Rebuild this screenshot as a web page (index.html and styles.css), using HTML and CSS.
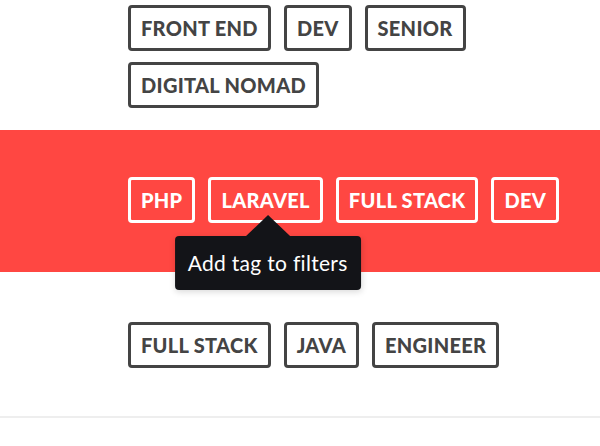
FILE: index.html
```html
<!DOCTYPE html>
<html lang="en">
<head>
<meta charset="utf-8">
<title>Tags</title>
<link rel="stylesheet" href="styles.css">
</head>
<body>
<div class="list">
  <div class="row row-first">
    <div class="tags">
      <span class="tag">Front End</span>
      <span class="tag">Dev</span>
      <span class="tag">Senior</span>
      <span class="tag">Digital Nomad</span>
    </div>
  </div>
  <div class="row row-hot">
    <div class="tags">
      <span class="tag">PHP</span>
      <span class="tag tag-tip">Laravel
        <span class="tooltip">Add tag to filters</span>
      </span>
      <span class="tag">Full Stack</span>
      <span class="tag">Dev</span>
    </div>
  </div>
  <div class="row row-last">
    <div class="tags">
      <span class="tag">Full Stack</span>
      <span class="tag">Java</span>
      <span class="tag">Engineer</span>
    </div>
  </div>
</div>
</body>
</html>
```

FILE: styles.css
```css
html, body {
  margin: 0;
  padding: 0;
  background: #ffffff;
}

body {
  font-family: Lato, "Open Sans", sans-serif;
  width: 600px;
  height: 446px;
  overflow: hidden;
}

.row {
  padding-left: 128px;
}

.row-first {
  padding-top: 5px;
  padding-bottom: 22px;
}

.row-hot {
  background: #ff4742;
  padding-top: 47px;
  padding-bottom: 49px;
}

.row-last {
  padding-top: 50px;
  padding-bottom: 48px;
  border-bottom: 2px solid #eeeeee;
}

.tags {
  display: flex;
  flex-wrap: wrap;
  gap: 11px 13px;
  width: 450px;
}

.tag {
  position: relative;
  display: inline-block;
  box-sizing: border-box;
  height: 46px;
  padding: 0 10px;
  border: 3px solid #444444;
  border-radius: 4px;
  color: #444444;
  font-size: 20px;
  font-weight: 900;
  line-height: 40px;
  letter-spacing: 0.3px;
  text-transform: uppercase;
  white-space: nowrap;
}

.row-hot .tag {
  border-color: #ffffff;
  color: #ffffff;
}

.tooltip {
  position: absolute;
  top: 56px;
  left: 50%;
  transform: translateX(calc(-50% + 2px));
  z-index: 2;
  padding: 0 13px;
  height: 54px;
  line-height: 54px;
  background: #131418;
  border-radius: 4px;
  color: #ffffff;
  font-size: 21px;
  font-weight: 400;
  letter-spacing: 0.3px;
  text-transform: none;
  box-shadow: 0 2px 6px rgba(0, 0, 0, 0.15);
}

.tooltip::before {
  content: "";
  position: absolute;
  left: 50%;
  top: -21px;
  margin-left: -22px;
  border-left: 22px solid transparent;
  border-right: 22px solid transparent;
  border-bottom: 21px solid #131418;
}
```
